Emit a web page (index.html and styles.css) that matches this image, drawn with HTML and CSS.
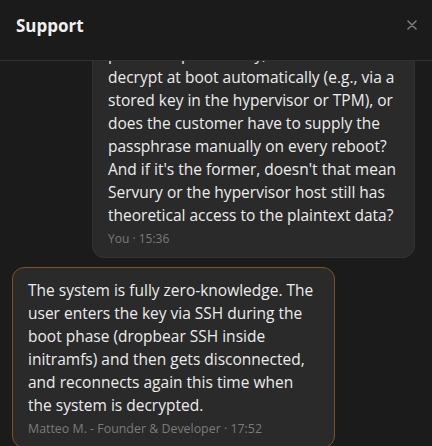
FILE: index.html
```html
<!DOCTYPE html>
<html lang="en">
<head>
<meta charset="utf-8">
<title>Support</title>
<link rel="stylesheet" href="styles.css">
</head>
<body>
<div class="panel">
  <header class="header">
    <h1 class="title">Support</h1>
    <button class="close" aria-label="Close">
      <svg width="10" height="10" viewBox="0 0 10 10"><path d="M1 1L9 9M9 1L1 9" stroke="currentColor" stroke-width="1.6" stroke-linecap="round"/></svg>
    </button>
  </header>
  <main class="messages">
    <div class="list">
      <div class="bubble bubble-user">
        <p class="text">Quick question: is the disk encrypted<br>in a ZFS dataset with a key stored in a<br>pool via a per-VM key, so it can<br>decrypt at boot automatically (e.g., via a stored key in the hypervisor or TPM), or does the customer have to supply the passphrase manually on every reboot? And if it's the former, doesn't that mean Servury or the hypervisor host still has theoretical access to the plaintext data?</p>
        <div class="meta">You · 15:36</div>
      </div>
      <div class="bubble bubble-staff">
        <p class="text">The system is fully zero-knowledge. The user enters the key via SSH during the boot phase (dropbear SSH inside initramfs) and then gets disconnected, and reconnects again this time when the system is decrypted.</p>
        <div class="meta meta-staff">Matteo M. - Founder &amp; Developer · 17:52</div>
      </div>
    </div>
  </main>
</div>
</body>
</html>
```
FILE: styles.css
```css
* { box-sizing: border-box; }
html, body { margin: 0; padding: 0; height: 100%; }
body {
  background: #1b1b1b;
  font-family: "Open Sans", "Noto Sans", sans-serif;
  color: #e8e8e8;
  overflow: hidden;
}
.panel {
  display: flex;
  flex-direction: column;
  height: 446px;
}
.header {
  height: 61px;
  flex: none;
  display: flex;
  align-items: center;
  justify-content: space-between;
  padding: 0 14px 10px 16px;
  background: #1b1b1b;
  border-bottom: 1px solid #303030;
  position: relative;
  z-index: 2;
}
.title {
  margin: 0;
  font-size: 17px;
  font-weight: 700;
  color: #f0f0f0;
}
.close {
  background: none;
  border: 0;
  padding: 0;
  width: 12px;
  height: 12px;
  display: flex;
  align-items: center;
  justify-content: center;
  color: #7a7a7a;
}
.messages {
  flex: 1;
  overflow: hidden;
  padding: 0 17px 0 12px;
  background: #1b1b1b;
}
.list {
  display: flex;
  flex-direction: column;
  gap: 9px;
  margin-top: -76px;
}
.bubble {
  width: 323px;
  border-radius: 12px;
  background: #2a2a2a;
  padding: 11px 15px 10px 15px;
}
.bubble-user {
  align-self: flex-end;
  border: 1px solid #333333;
}
.bubble-staff {
  align-self: flex-start;
  border: 1px solid #7c5418;
}
.text {
  margin: 0;
  font-size: 15.5px;
  line-height: 23px;
  color: #ececec;
}
.meta {
  margin-top: 4px;
  font-size: 12px;
  line-height: 16px;
  color: #7a7a7a;
}
.meta-staff {
  font-size: 12.4px;
}
```
